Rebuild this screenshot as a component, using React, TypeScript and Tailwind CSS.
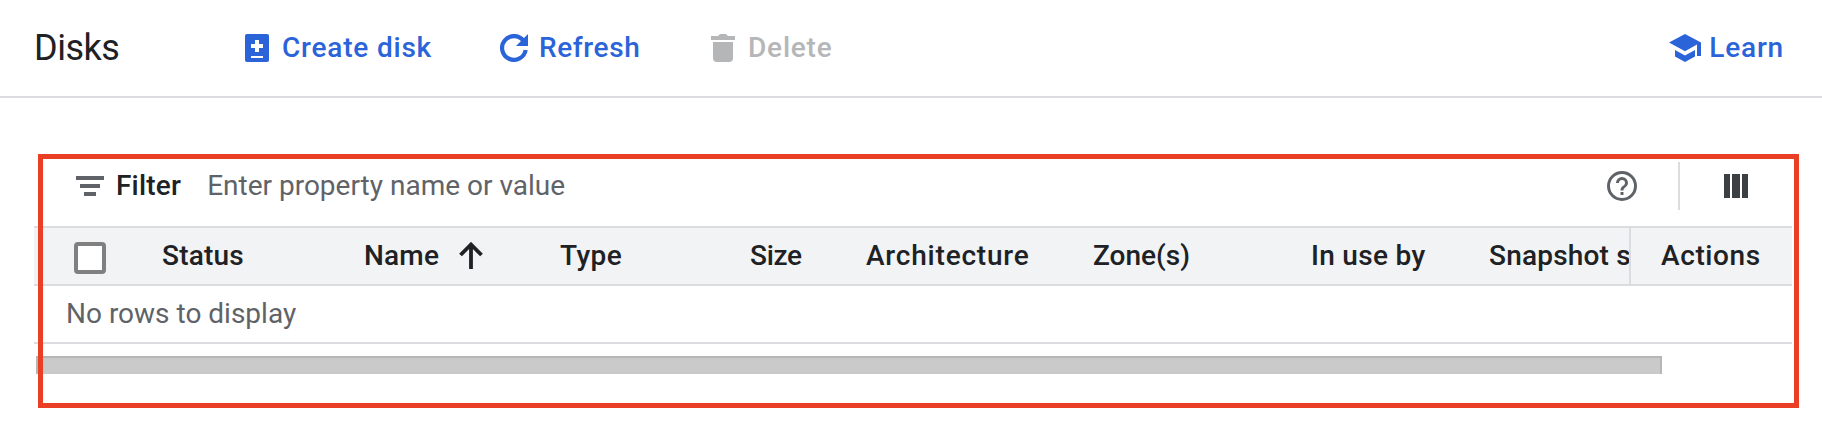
import React from "react";

const columns = [
  { label: "Status", cell: "w-[202px]", text: "tracking-[0.2px]" },
  { label: "Name", cell: "w-[196px]", text: "tracking-[0.2px]", sorted: true },
  { label: "Type", cell: "w-[190px]", text: "tracking-[0.4px]" },
  { label: "Size", cell: "w-[116px]", text: "tracking-[-0.3px]" },
  { label: "Architecture", cell: "w-[227px]", text: "tracking-[0.8px]" },
  { label: "Zone(s)", cell: "w-[218px]", text: "tracking-normal" },
  { label: "In use by", cell: "w-[178px]", text: "tracking-[0.3px]" },
  { label: "Snapshot s", cell: "w-[140px]", text: "tracking-[0.2px]" },
];

function CreateDiskIcon() {
  return (
    <svg width="24" height="28" viewBox="0 0 24 28" className="block">
      <rect width="24" height="28" rx="2" fill="currentColor" />
      <path d="M10 6h4v4h4v4h-4v4h-4v-4H6v-4h4zM6 22h12v2H6z" fill="#fff" />
    </svg>
  );
}

function RefreshIcon() {
  return (
    <svg width="28" height="28" viewBox="0 0 28 28" className="block">
      <path d="M23.500 6.800A11.900 11.900 0 1 0 25.700 16" fill="none" stroke="currentColor" strokeWidth="4.200" />
      <path d="M28 0v12H16z" fill="currentColor" />
    </svg>
  );
}

function DeleteIcon() {
  return (
    <svg width="24" height="28" viewBox="0 0 24 28" fill="currentColor" className="block">
      <path d="M0 2h7l2-2h6l2 2h7v4H0zM2 8h20v16a4 4 0 0 1-4 4H6a4 4 0 0 1-4-4z" />
    </svg>
  );
}

function LearnIcon() {
  return (
    <svg width="32" height="28" viewBox="0 0 32 28" fill="currentColor" className="block">
      <path d="M16 0 0 8.500 16 17.200l12-6.600V22h4V8.500zM6 16v6.500L16 28l10-5.500V16l-10 5.500z" />
    </svg>
  );
}

function HelpIcon() {
  return (
    <svg width="30" height="30" viewBox="2 2 20 20" fill="currentColor" className="block">
      <path d="M11 18h2v-2h-2zm1-16a10 10 0 1 0 0 20 10 10 0 0 0 0-20m0 18a8 8 0 1 1 0-16 8 8 0 0 1 0 16m0-14a4 4 0 0 0-4 4h2a2 2 0 1 1 4 0c0 2-3 1.750-3 5h2c0-2.250 3-2.500 3-5a4 4 0 0 0-4-4" />
    </svg>
  );
}

export default function App() {
  return (
    <div className="relative h-[438px] w-[1822px] overflow-hidden bg-white font-['Roboto',sans-serif] text-[28px] leading-8 text-[#202124]">
      <header className="flex h-[98px] items-center border-b-2 border-[#dadce0] pr-[38px] pl-[34px] font-medium text-[#2b63d9]">
        <h1 className="w-[211px] text-[36px] font-normal tracking-[-0.5px] text-[#202124]">Disks</h1>
        <button className="flex w-[255px] items-center gap-[13px]">
          <CreateDiskIcon />
          <span className="tracking-[0.8px] whitespace-nowrap">Create disk</span>
        </button>
        <button className="flex w-[211px] items-center gap-[11px]">
          <RefreshIcon />
          <span className="tracking-[0.6px]">Refresh</span>
        </button>
        <button className="flex items-center gap-[13px] text-[#b5b6b8]" disabled>
          <DeleteIcon />
          <span className="tracking-[0.8px]">Delete</span>
        </button>
        <button className="ml-auto flex items-center gap-2">
          <LearnIcon />
          <span className="tracking-[0.8px]">Learn</span>
        </button>
      </header>

      <main className="mt-14 mr-[30px] ml-[34px]">
        <div className="flex h-[72px] items-center pb-2 pl-[42px]">
          <svg width="28" height="20" viewBox="0 0 28 20" fill="#5f6368" className="block">
            <path d="M0 0h28v4H0zM4 8h20v4H4zM8 16h12v4H8z" />
          </svg>
          <span className="ml-3 font-medium tracking-[0.2px]">Filter</span>
          <span className="ml-[26px] text-[#5f6368]">Enter property name or value</span>
          <div className="ml-auto flex items-center text-[#5f6368]">
            <HelpIcon />
            <div className="ml-[41px] h-12 w-0.5 bg-[#dadce0]" />
            <svg width="24" height="24" viewBox="0 0 24 24" fill="#3c4043" className="mr-11 ml-11 block">
              <path d="M0 0h6v24H0zM8 0h8v24H8zM18 0h6v24h-6z" />
            </svg>
          </div>
        </div>

        <div className="flex h-[60px] border-y-2 border-[#dadce0] bg-[#f1f3f4] font-medium">
          <div className="flex min-w-0 flex-1 items-center overflow-hidden pl-10">
            <div className="mt-1 size-8 shrink-0 rounded-[4px] border-4 border-[#808080] bg-white" />
            <div className="w-14 shrink-0" />
            {columns.map((c) => (
              <div key={c.label} className={`flex shrink-0 items-center whitespace-nowrap ${c.cell}`}>
                <span className={c.text}>{c.label}</span>
                {c.sorted && (
                  <svg width="24" height="28" viewBox="0 0 24 28" fill="none" stroke="currentColor" strokeWidth="3.800" className="ml-5 block">
                    <path d="M12 27V3M1.500 13 12 2.500 22.500 13" />
                  </svg>
                )}
              </div>
            ))}
          </div>
          <div className="flex w-[163px] items-center border-l-2 border-[#dadce0] pl-[30px] tracking-[0.6px]">Actions</div>
        </div>
        <div className="flex h-[58px] items-center border-b-2 border-[#dadce0] pl-8 text-[#5f6368]">
          No rows to display
        </div>
        <div className="mt-3 ml-0.5 h-[18px] w-[1626px] border-x-2 border-t-2 border-[#b5b6b6] bg-[#cacaca]" />
      </main>
      <div className="pointer-events-none absolute top-[154px] left-[38px] h-[254px] w-[1761px] border-[5px] border-[#eb3f25]" />
    </div>
  );
}
